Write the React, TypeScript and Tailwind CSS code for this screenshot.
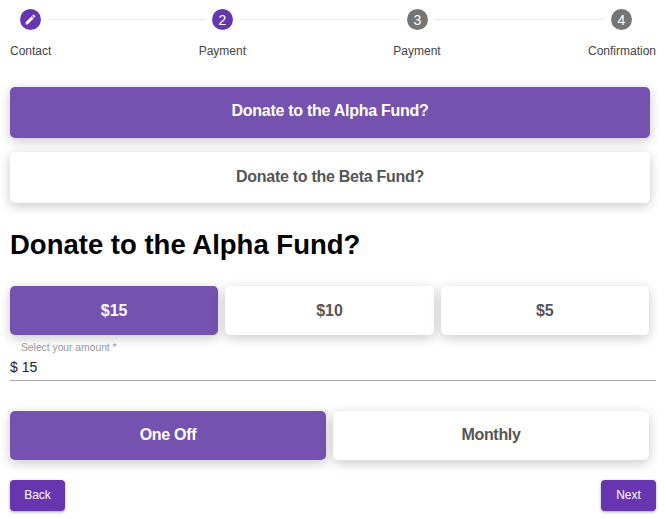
import React from "react";

const shadow = "shadow-[0_3px_12px_rgba(0,0,0,0.22)]";

function Circle({ active, children }: { active?: boolean; children: React.ReactNode }) {
  return (
    <div
      className={`flex h-[21px] w-[21px] shrink-0 items-center justify-center rounded-full text-[14px] leading-none text-white ${
        active ? "bg-[#6735b0]" : "bg-[#757575]"
      }`}
    >
      {children}
    </div>
  );
}

function Line({ width }: { width: string }) {
  return <div className={`mx-[7px] h-px bg-[#e8e8e8] ${width}`} />;
}

function Choice({
  active,
  label,
  size,
  className = "",
}: {
  active?: boolean;
  label: string;
  size: string;
  className?: string;
}) {
  return (
    <button
      className={`flex items-center justify-center rounded-[5px] font-bold ${size} ${shadow} ${
        active ? "bg-[#7551b0] text-white" : "bg-white text-[#555555]"
      } ${className}`}
    >
      {label}
    </button>
  );
}

function NavButton({ label }: { label: string }) {
  return (
    <button className="flex h-[31px] w-[55px] items-center justify-center rounded-[4px] bg-[#6735b0] pb-[1px] text-[12px] font-medium text-white shadow-[0_1px_3px_rgba(0,0,0,0.35)]">
      {label}
    </button>
  );
}

export default function App() {
  return (
    <div className="h-[519px] w-[666px] overflow-hidden bg-white font-['Liberation_Sans',Arial,sans-serif]">
      <div className="flex items-center pl-[20px] pt-[9px]">
        <Circle active>
          <svg viewBox="0 0 24 24" className="h-[13px] w-[13px] fill-white">
            <path d="M3 17.25V21h3.75L17.81 9.94l-3.75-3.75L3 17.25zM20.71 7.04a1 1 0 0 0 0-1.41l-2.34-2.34a1 1 0 0 0-1.41 0l-1.83 1.83 3.75 3.75 1.83-1.83z" />
          </svg>
        </Circle>
        <Line width="w-[157px]" />
        <Circle active>2</Circle>
        <Line width="w-[160px]" />
        <Circle>3</Circle>
        <Line width="w-[169px]" />
        <Circle>4</Circle>
      </div>

      <div className="mt-[14px] flex justify-between pl-[10px] pr-[10px] text-[12px] leading-[14px] text-[#444444]">
        <span>Contact</span>
        <span>Payment</span>
        <span>Payment</span>
        <span>Confirmation</span>
      </div>

      <div className="mt-[29px] flex flex-col gap-[14px] pl-[10px] pr-[16px]">
        <Choice active label="Donate to the Alpha Fund?" size="h-[51px] pb-[3px] text-[16px] tracking-[-0.28px]" />
        <Choice label="Donate to the Beta Fund?" size="h-[51px] pb-[2px] text-[16px] tracking-[-0.28px]" />
      </div>

      <h1 className="ml-[10px] mt-[26px] text-[27.5px] font-bold leading-[32px] text-black">
        Donate to the Alpha Fund?
      </h1>

      <div className="mt-[25px] flex gap-[7px] pl-[10px] pr-[17px]">
        <Choice active label="$15" size="h-[49px] text-[16px]" className="flex-1" />
        <Choice label="$10" size="h-[49px] text-[16px]" className="flex-1" />
        <Choice label="$5" size="h-[49px] text-[16px]" className="flex-1" />
      </div>

      <div className="ml-[10px] mr-[10px] mt-[7px] border-b border-[#aaaaaa] pb-[5px]">
        <div className="pl-[11px] text-[10.3px] leading-[12px] text-[#999999]">Select your amount *</div>
        <div className="mt-[5px] text-[14px] leading-[16px] text-[#222222]">$ 15</div>
      </div>

      <div className="mt-[30px] flex gap-[7px] pl-[10px] pr-[17px]">
        <Choice active label="One Off" size="h-[49px] pb-[2px] text-[16px] tracking-[-0.3px]" className="flex-1" />
        <Choice label="Monthly" size="h-[49px] pb-[2px] text-[16px] tracking-[-0.3px]" className="flex-1" />
      </div>

      <div className="mt-[20px] flex justify-between px-[10px]">
        <NavButton label="Back" />
        <NavButton label="Next" />
      </div>
    </div>
  );
}
